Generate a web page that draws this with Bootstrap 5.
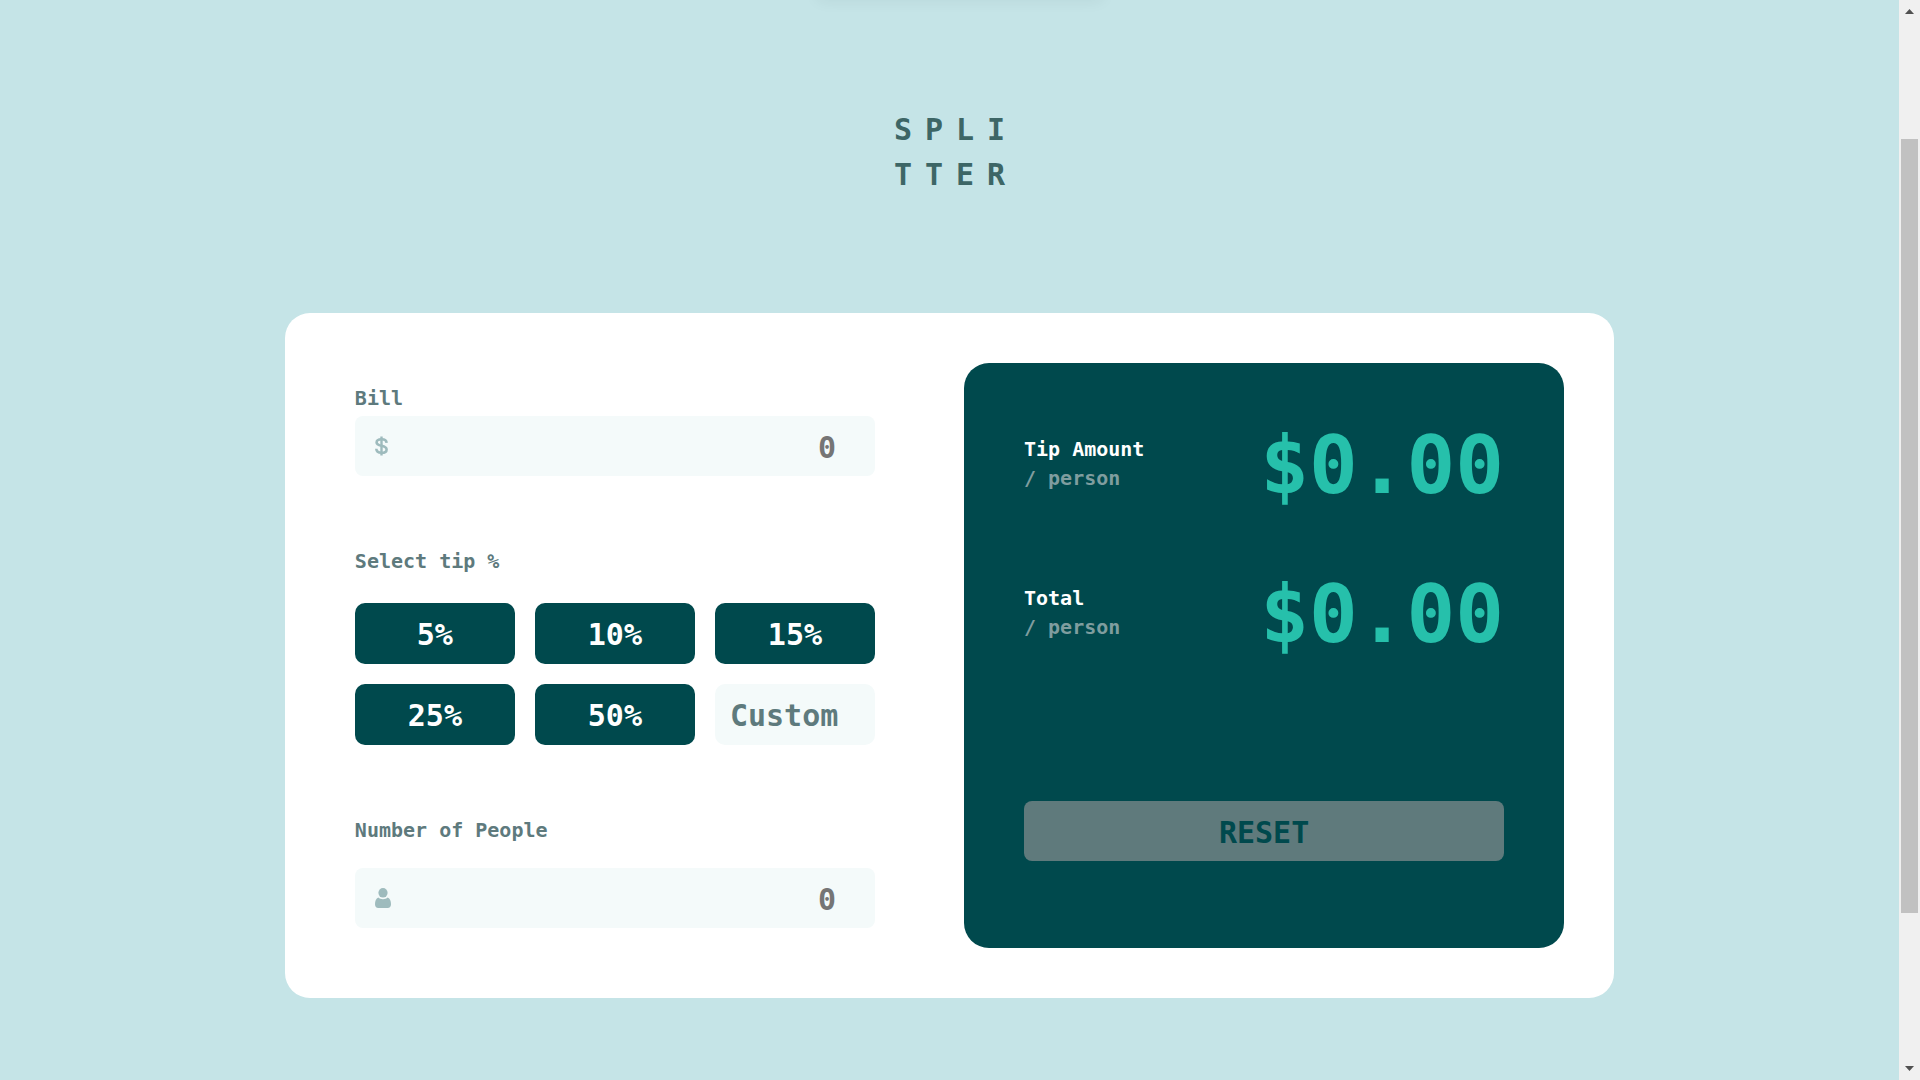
<!DOCTYPE html>
<html lang="en">
<head>
<meta charset="utf-8">
<meta name="viewport" content="width=device-width, initial-scale=1">
<title>Splitter</title>
<link href="https://cdn.jsdelivr.net/npm/bootstrap@5.3.0/dist/css/bootstrap.min.css" rel="stylesheet">
<style>
  :root {
    --dark: #00494d;
    --grey: #5e7a7d;
    --pale: #f4fafa;
    --mint: #26c0ab;
    --aqua: #c5e4e7;
  }
  body {
    background: var(--aqua);
    font-family: "DejaVu Sans Mono", "Liberation Mono", monospace;
    font-size: 20px;
    line-height: 30px;
    font-weight: 700;
    color: var(--grey);
  }
  .page-main { padding: 107px 0 82px; }
  .page-glow {
    left: 50%;
    bottom: 100%;
    width: 284px;
    height: 20px;
    margin-left: -142px;
    box-shadow: 0 0 16px rgba(0, 40, 45, .07);
  }
  .brand {
    margin: 0 0 116px;
    padding-left: 13px;
    font-size: 30px;
    line-height: 45px;
    font-weight: 700;
    letter-spacing: 13px;
    color: #3d6666;
  }
  .calc {
    display: grid;
    grid-template-columns: 13fr 15fr;
    width: 70%;
    padding: 50px 50px 50px 70px;
    border-radius: 25px;
    gap: 89px;
  }
  .calc-form { gap: 70px; padding: 20px 0; min-width: 0; }
  .calc-panel {
    min-width: 0;
    padding: 60px 60px 87px;
    border-radius: 25px;
    background: var(--dark);
  }
  .field-label { display: block; font-size: 20px; line-height: 30px; }
  .label-near { margin-bottom: 3px; }
  .label-mid { margin-bottom: 23px; }
  .label-far { margin-bottom: 27px; }
  .entry {
    height: 60px;
    padding: 0 39px 0 20px;
    border-radius: 8px;
    background: var(--pale);
  }
  .entry input, .tip-custom {
    min-width: 0;
    border: 0;
    outline: 0;
    font-size: 30px;
    font-weight: 700;
    color: var(--dark);
  }
  .entry input { background: transparent; padding: 2px 0 0; }
  .entry input::placeholder { color: #757575; opacity: 1; }
  .tips { display: grid; grid-template-columns: repeat(3, 1fr); gap: 20px; }
  .tip, .tip-custom { height: 61px; border-radius: 10px; }
  .tip, .tip:hover {
    padding: 2px 0 0;
    border: 0;
    font-size: 30px;
    font-weight: 700;
    color: #fff;
    background: var(--dark);
  }
  .tip-custom { background: var(--pale); padding: 2px 15px 0; }
  .tip-custom::placeholder { color: var(--grey); opacity: 1; }
  .results { gap: 67px; }
  .caption { line-height: 29px; }
  .per { color: #7f9d9f; }
  .amount { padding-top: 2px; font-size: 81px; line-height: 80px; color: var(--mint); }
  .reset, .reset:hover {
    height: 60px;
    padding: 2px 0 0;
    border: 0;
    border-radius: 8px;
    font-size: 30px;
    font-weight: 700;
    color: var(--dark);
    background: #5f7a7c;
  }
  .scroller { top: 0; width: 21px; height: 100vh; background: #f0f0f0; }
  .scroller svg { display: block; flex: none; }
  .track-a { flex: 118; }
  .thumb { flex: 774; margin: 0 2px; background: #c1c1c1; }
  .track-b { flex: 146; }
  @media (max-width: 1399px) {
    .calc { width: 92%; padding: 32px; gap: 32px; }
    .calc-panel { padding: 32px; }
    .amount { font-size: 48px; }
  }
  @media (max-width: 991px) {
    .calc { grid-template-columns: 1fr; }
    .calc-panel { gap: 48px; }
  }
</style>
<script src="https://cdn.jsdelivr.net/npm/bootstrap@5.3.0/dist/js/bootstrap.bundle.min.js"></script>
</head>
<body class="d-flex min-vh-100">
  <div class="page-glow position-fixed"></div>
  <main class="page-main d-flex flex-column align-items-center flex-grow-1">
    <h1 class="brand">SPLI<br>TTER</h1>
    <div class="calc bg-white">
      <form class="calc-form d-flex flex-column">
        <div>
          <label class="field-label label-near" for="bill">Bill</label>
          <div class="entry d-flex align-items-center">
            <svg width="13" height="20" viewBox="0 0 13 20" fill="none" stroke="#9ebbbd" aria-hidden="true">
              <path d="M6.500 .5v19" stroke-width="2.400"/>
              <path d="M11.600 6.900C11.500 4.600 9.600 3.200 6.600 3.200 3.700 3.200 1.600 4.400 1.600 6.400c0 4.400 10 2.400 10 7 0 2.200-2 3.400-5 3.400-3.300 0-5.200-1.400-5.300-4" stroke-width="2.600"/>
            </svg>
            <input id="bill" class="flex-grow-1 text-end" type="text" inputmode="decimal" placeholder="0">
          </div>
        </div>
        <div>
          <label class="field-label label-far" for="custom">Select tip %</label>
          <div class="tips">
            <button type="button" class="btn tip">5%</button>
            <button type="button" class="btn tip">10%</button>
            <button type="button" class="btn tip">15%</button>
            <button type="button" class="btn tip">25%</button>
            <button type="button" class="btn tip">50%</button>
            <input id="custom" class="tip-custom" type="text" inputmode="numeric" placeholder="Custom">
          </div>
        </div>
        <div>
          <label class="field-label label-mid" for="people">Number of People</label>
          <div class="entry d-flex align-items-center">
            <svg width="16" height="20" viewBox="0 0 16 20" fill="#9ebbbd" aria-hidden="true">
              <ellipse cx="8" cy="4.800" rx="4.600" ry="4.800"/>
              <path d="M3.300 9.600C4.500 10.700 6.100 11.300 8 11.300s3.500-.6 4.700-1.700C15 10.300 16 13.400 16 16.300 16 18.700 14.800 20 12.700 20H3.300C1.200 20 0 18.700 0 16.300c0-2.900 1-6 3.300-6.700z"/>
            </svg>
            <input id="people" class="flex-grow-1 text-end" type="text" inputmode="numeric" placeholder="0">
          </div>
        </div>
      </form>
      <section class="calc-panel d-flex flex-column justify-content-between">
        <div class="results d-flex flex-column">
          <div class="d-flex justify-content-between align-items-center">
            <div class="caption"><div class="text-white">Tip Amount</div><div class="per">/ person</div></div>
            <output class="amount">$0.00</output>
          </div>
          <div class="d-flex justify-content-between align-items-center">
            <div class="caption"><div class="text-white">Total</div><div class="per">/ person</div></div>
            <output class="amount">$0.00</output>
          </div>
        </div>
        <button type="button" class="btn reset w-100">RESET</button>
      </section>
    </div>
  </main>
  <div class="scroller position-sticky d-flex flex-column flex-shrink-0" aria-hidden="true">
    <svg width="21" height="21" viewBox="0 0 21 21"><path d="M6 14L10.500 9 15 14z" fill="#505050"/></svg>
    <div class="track-a"></div>
    <div class="thumb"></div>
    <div class="track-b"></div>
    <svg width="21" height="21" viewBox="0 0 21 21"><path d="M6 7L10.500 12 15 7z" fill="#505050"/></svg>
  </div>
</body>
</html>
